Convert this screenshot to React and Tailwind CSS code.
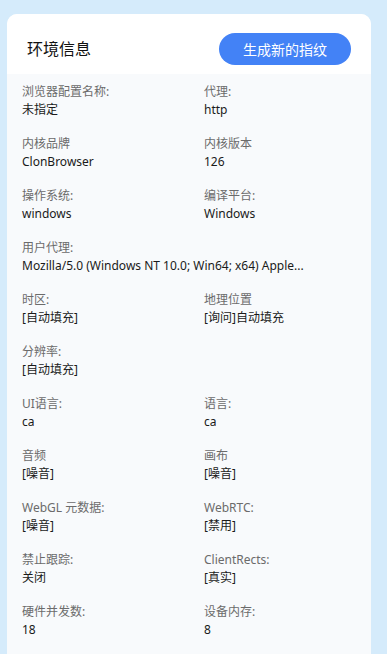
import React from "react";

const rows = [
  [{ label: "浏览器配置名称:", value: "未指定" }, { label: "代理:", value: "http" }],
  [{ label: "内核品牌", value: "ClonBrowser" }, { label: "内核版本", value: "126" }],
  [{ label: "操作系统:", value: "windows" }, { label: "编译平台:", value: "Windows" }],
  [{ label: "用户代理:", value: "Mozilla/5.0 (Windows NT 10.0; Win64; x64) Apple...", wide: true }],
  [{ label: "时区:", value: "[自动填充]" }, { label: "地理位置", value: "[询问]自动填充" }],
  [{ label: "分辨率:", value: "[自动填充]" }],
  [{ label: "UI语言:", value: "ca" }, { label: "语言:", value: "ca" }],
  [{ label: "音频", value: "[噪音]" }, { label: "画布", value: "[噪音]" }],
  [{ label: "WebGL 元数据:", value: "[噪音]" }, { label: "WebRTC:", value: "[禁用]" }],
  [{ label: "禁止跟踪:", value: "关闭" }, { label: "ClientRects:", value: "[真实]" }],
  [{ label: "硬件并发数:", value: "18" }, { label: "设备内存:", value: "8" }],
];

function Field({ label, value, wide }) {
  return (
    <div className={wide ? "col-span-2" : ""}>
      <div className="text-[12px] leading-[18px] text-[#6b6b6b]">{label}</div>
      <div className="text-[12px] leading-[18px] text-[#1a1a1a] whitespace-nowrap">{value}</div>
    </div>
  );
}

export default function App() {
  return (
    <div
      className="min-h-screen bg-[#d5ebfb] pt-[14px] pl-[7px] pr-[16px]"
      style={{ fontFamily: '"Noto Sans", "Noto Sans CJK SC", sans-serif' }}
    >
      <div className="rounded-t-[10px] overflow-hidden bg-[#f8fafc] min-h-[660px]">
        <div className="flex items-center justify-between bg-white h-[60px] pt-[10px] pl-[20px] pr-[20px]">
          <h2 className="text-[16px] text-[#111]">环境信息</h2>
          <button className="h-[32px] w-[132px] rounded-full bg-[#4382f6] text-white text-[14px]">
            生成新的指纹
          </button>
        </div>
        <div className="grid grid-cols-2 gap-x-[30px] gap-y-[16px] px-[15px] pt-[9px] pb-6">
          {rows.map((row, i) => (
            <React.Fragment key={i}>
              {row.map((f) => (
                <Field key={f.label} {...f} />
              ))}
              {row.length === 1 && !row[0].wide && <div />}
            </React.Fragment>
          ))}
        </div>
      </div>
    </div>
  );
}
